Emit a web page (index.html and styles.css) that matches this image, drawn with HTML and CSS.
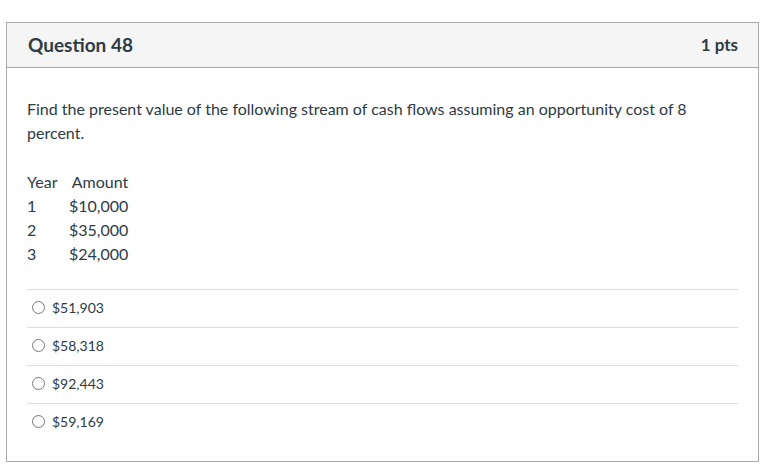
FILE: index.html
```html
<!DOCTYPE html>
<html>
<head>
<meta charset="utf-8">
<link rel="stylesheet" href="styles.css">
</head>
<body>
<div class="card">
  <div class="header">
    <span class="title">Question 48</span>
    <span class="pts">1 pts</span>
  </div>
  <div class="body">
    <p class="text">Find the present value of the following stream of cash flows assuming an opportunity cost of 8 percent.</p>
    <table class="flows">
      <tr><td>Year</td><td>Amount</td></tr>
      <tr><td>1</td><td>$10,000</td></tr>
      <tr><td>2</td><td>$35,000</td></tr>
      <tr><td>3</td><td>$24,000</td></tr>
    </table>
    <div class="answers">
      <div class="answer"><span class="radio"></span><span>$51,903</span></div>
      <div class="answer"><span class="radio"></span><span>$58,318</span></div>
      <div class="answer"><span class="radio"></span><span>$92,443</span></div>
      <div class="answer"><span class="radio"></span><span>$59,169</span></div>
    </div>
  </div>
</div>
</body>
</html>
```
FILE: styles.css
```css
html, body { margin: 0; padding: 0; background: #fff; }
body {
  font-family: Lato, "Open Sans", sans-serif;
  color: #2d3b45;
  padding: 22px 20px 0 6px;
}
.card {
  width: 753px;
  border: 1px solid #aaa;
  box-sizing: border-box;
  height: 440px;
}
.header {
  display: flex;
  justify-content: space-between;
  align-items: center;
  background: #f5f5f5;
  border-bottom: 1px solid #aaa;
  padding: 0 20px 1px 21px;
  box-sizing: border-box;
  height: 45px;
}
.title { font-weight: bold; font-size: 19px; }
.pts { font-weight: bold; font-size: 17px; }
.body { padding: 29px 20px 0 20px; }
.text {
  margin: 0;
  font-size: 16px;
  line-height: 24px;
}
.flows {
  margin-top: 24px;
  border-collapse: collapse;
  font-size: 16px;
}
.flows td { padding: 0; height: 24px; }
.flows td:first-child { width: 42px; }
.flows td:last-child { text-align: right; }
.answers { margin-top: 24px; }
.answer {
  display: flex;
  align-items: center;
  gap: 7px;
  height: 38px;
  border-top: 1px solid #ddd;
  padding: 0 0 2px 5px;
  font-size: 14px;
  box-sizing: border-box;
}
.radio {
  width: 11px;
  height: 11px;
  border: 1px solid #777;
  border-radius: 50%;
  display: inline-block;
}
```
